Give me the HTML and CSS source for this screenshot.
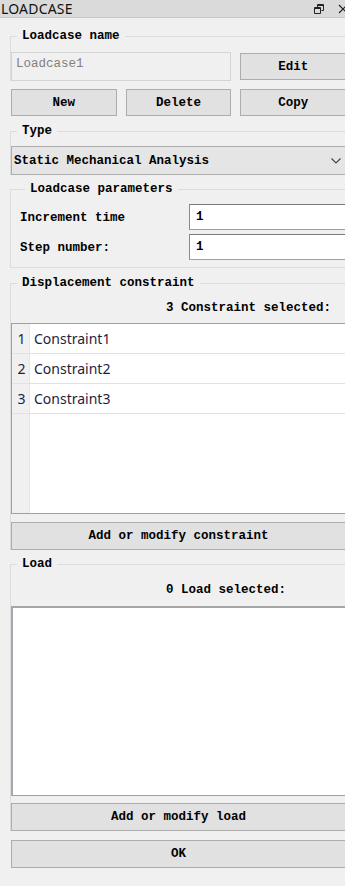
FILE: index.html
```html
<!DOCTYPE html>
<html>
<head>
<meta charset="utf-8">
<link rel="stylesheet" href="styles.css">
</head>
<body>
<div class="titlebar">
  <span class="title-text">LOADCASE</span>
  <span class="title-icons">
    <svg class="ico-restore" width="10" height="10" viewBox="0 0 10 10"><path d="M3.5 0.5h6v6h-2M0.5 3.5h6v6h-6z M0.5 4.5h6" fill="none" stroke="#222" stroke-width="1"/><path d="M3.5 0.5v3 M3.5 1.5h6" fill="none" stroke="#222" stroke-width="1"/></svg>
    <svg class="ico-close" width="10" height="10" viewBox="0 0 10 10"><path d="M1 1l8 8M9 1l-8 8" stroke="#222" stroke-width="1.2"/></svg>
  </span>
</div>
<div class="panel">
  <div class="group g-name">
    <div class="gtitle">Loadcase name</div>
    <div class="name-row">
      <div class="lineedit disabled">Loadcase1</div>
      <div class="btn btn-edit">Edit</div>
    </div>
  </div>
  <div class="btn-row">
    <div class="btn">New</div>
    <div class="btn">Delete</div>
    <div class="btn">Copy</div>
  </div>
  <div class="group g-type">
    <div class="gtitle">Type</div>
    <div class="combo">
      <span>Static Mechanical Analysis</span>
      <svg class="chev" width="10" height="6" viewBox="0 0 10 6"><path d="M0.5 0.5l4.5 4.5l4.5-4.5" fill="none" stroke="#444" stroke-width="1.1"/></svg>
    </div>
  </div>
  <div class="group g-params">
    <div class="gtitle wide">Loadcase parameters</div>
    <div class="param-row r1">
      <span class="plabel">Increment time</span>
      <div class="input">1</div>
    </div>
    <div class="param-row r2">
      <span class="plabel">Step number:</span>
      <div class="input">1</div>
    </div>
  </div>
  <div class="group g-disp">
    <div class="gtitle">Displacement constraint</div>
    <div class="sel-label">3 Constraint selected:</div>
    <div class="table">
      <div class="trow"><div class="num">1</div><div class="cell">Constraint1</div></div>
      <div class="trow"><div class="num">2</div><div class="cell">Constraint2</div></div>
      <div class="trow"><div class="num">3</div><div class="cell">Constraint3</div></div>
      <div class="tfill"><div class="num"></div><div class="cell"></div></div>
    </div>
    <div class="btn wide-btn add-c">Add or modify constraint</div>
  </div>
  <div class="group g-load">
    <div class="gtitle">Load</div>
    <div class="sel-label load-sel">0 Load selected:</div>
    <div class="listbox"></div>
    <div class="btn wide-btn add-l">Add or modify load</div>
  </div>
  <div class="btn wide-btn ok-btn">OK</div>
</div>
</body>
</html>
```

FILE: styles.css
```css
html, body {
  margin: 0;
  padding: 0;
  overflow: hidden;
  background: #f0f0f0;
}
body {
  width: 345px;
  height: 886px;
  font-family: "Liberation Mono", "DejaVu Sans Mono", monospace;
  font-size: 12.5px;
  color: #000;
}
.titlebar {
  height: 17px;
  border-bottom: 1px solid #c6c6c6;
  background: #dadada;
  display: flex;
  align-items: center;
  justify-content: space-between;
  font-family: "Noto Sans", "Open Sans", sans-serif;
}
.title-text {
  font-size: 14px;
  line-height: 17px;
  padding-left: 1px;
  color: #111;
  letter-spacing: 0.2px;
}
.title-icons {
  display: flex;
  align-items: center;
  gap: 14px;
  margin-right: -3px;
}
.panel {
  width: 336px;
  padding-left: 10px;
  display: flex;
  flex-direction: column;
}
.group {
  border-top: 1px solid #dcdcdc;
  border-left: 1px solid #dcdcdc;
  display: flex;
  flex-direction: column;
}
.gtitle {
  align-self: flex-start;
  margin-top: -8px;
  margin-left: 6px;
  padding: 0 5px;
  line-height: 14px;
  height: 14px;
  background: #f0f0f0;
  font-weight: bold;
}
.gtitle.wide { margin-left: 14px; }

.g-name { margin-top: 18px; }
.name-row {
  margin-top: 9px;
  display: flex;
  align-items: flex-start;
}
.lineedit {
  box-sizing: border-box;
  width: 221px;
  height: 29px;
  border: 1px solid #d4d4d4;
  padding: 4px 0 0 4px;
  line-height: 14px;
  color: #808080;
}
.btn {
  box-sizing: border-box;
  background: #e1e1e1;
  border: 1px solid #adadad;
  display: flex;
  align-items: center;
  justify-content: center;
  font-weight: bold;
  line-height: 14px;
}
.btn-edit {
  margin-top: 1px;
  margin-left: 9px;
  width: 106px;
  height: 27px;
  padding-top: 1px;
}
.btn-row {
  margin-top: 8px;
  margin-left: 1px;
  display: flex;
  gap: 9px;
}
.btn-row .btn {
  width: 106px;
  height: 27px;
}
.g-type { margin-top: 15px; }
.combo {
  box-sizing: border-box;
  margin-top: 8px;
  height: 29px;
  background: #e5e5e5;
  border: 1px solid #adadad;
  display: flex;
  align-items: center;
  justify-content: space-between;
  padding: 0 4px 0 2px;
  font-weight: bold;
}
.chev { margin-top: 1px; }
.g-params {
  margin-top: 14px;
  border-bottom: 1px solid #dcdcdc;
  padding-bottom: 7px;
}
.param-row {
  display: flex;
  align-items: center;
  padding-left: 9px;
}
.param-row.r1 { margin-top: 8px; }
.param-row.r2 { margin-top: 4px; }
.plabel {
  width: 169px;
  font-weight: bold;
  padding-top: 1px;
}
.input {
  box-sizing: border-box;
  flex: 1;
  height: 26px;
  background: #fff;
  border: 1px solid #a0a0a0;
  border-top-color: #7a7a7a;
  border-left-color: #8a8a8a;
  padding: 5px 0 0 6px;
  line-height: 14px;
  font-weight: bold;
}
.g-disp { margin-top: 15px; }
.sel-label {
  margin-top: 11px;
  padding-left: 155px;
  line-height: 14px;
  font-weight: bold;
}
.table {
  box-sizing: border-box;
  margin-top: 8px;
  height: 191px;
  border: 1px solid #a0a0a0;
  border-right: none;
  background: #fff;
  display: flex;
  flex-direction: column;
  font-family: "Noto Sans", "Open Sans", sans-serif;
  font-size: 14px;
  color: #1e1e3c;
}
.trow {
  height: 29px;
  border-bottom: 1px solid #e2e2e2;
  display: flex;
}
.num {
  box-sizing: border-box;
  width: 18px;
  background: #f0f0f0;
  border-right: 1px solid #e6e6e6;
  display: flex;
  align-items: center;
  justify-content: center;
  padding-left: 2px;
}
.cell {
  flex: 1;
  display: flex;
  align-items: center;
  padding-left: 4px;
}
.tfill {
  flex: 1;
  display: flex;
}
.wide-btn {
  height: 28px;
}
.add-c { margin-top: 8px; }
.g-load { margin-top: 14px; }
.load-sel { margin-top: 12px; }
.listbox {
  box-sizing: border-box;
  margin-top: 9px;
  height: 190px;
  background: #fff;
  border: 1px solid #a0a0a0;
  border-top: 2px solid #a6a6a6;
  border-left: 2px solid #a6a8b0;
  border-right: none;
}
.add-l { margin-top: 7px; }
.ok-btn {
  margin-top: 9px;
  margin-left: 1px;
}
```
